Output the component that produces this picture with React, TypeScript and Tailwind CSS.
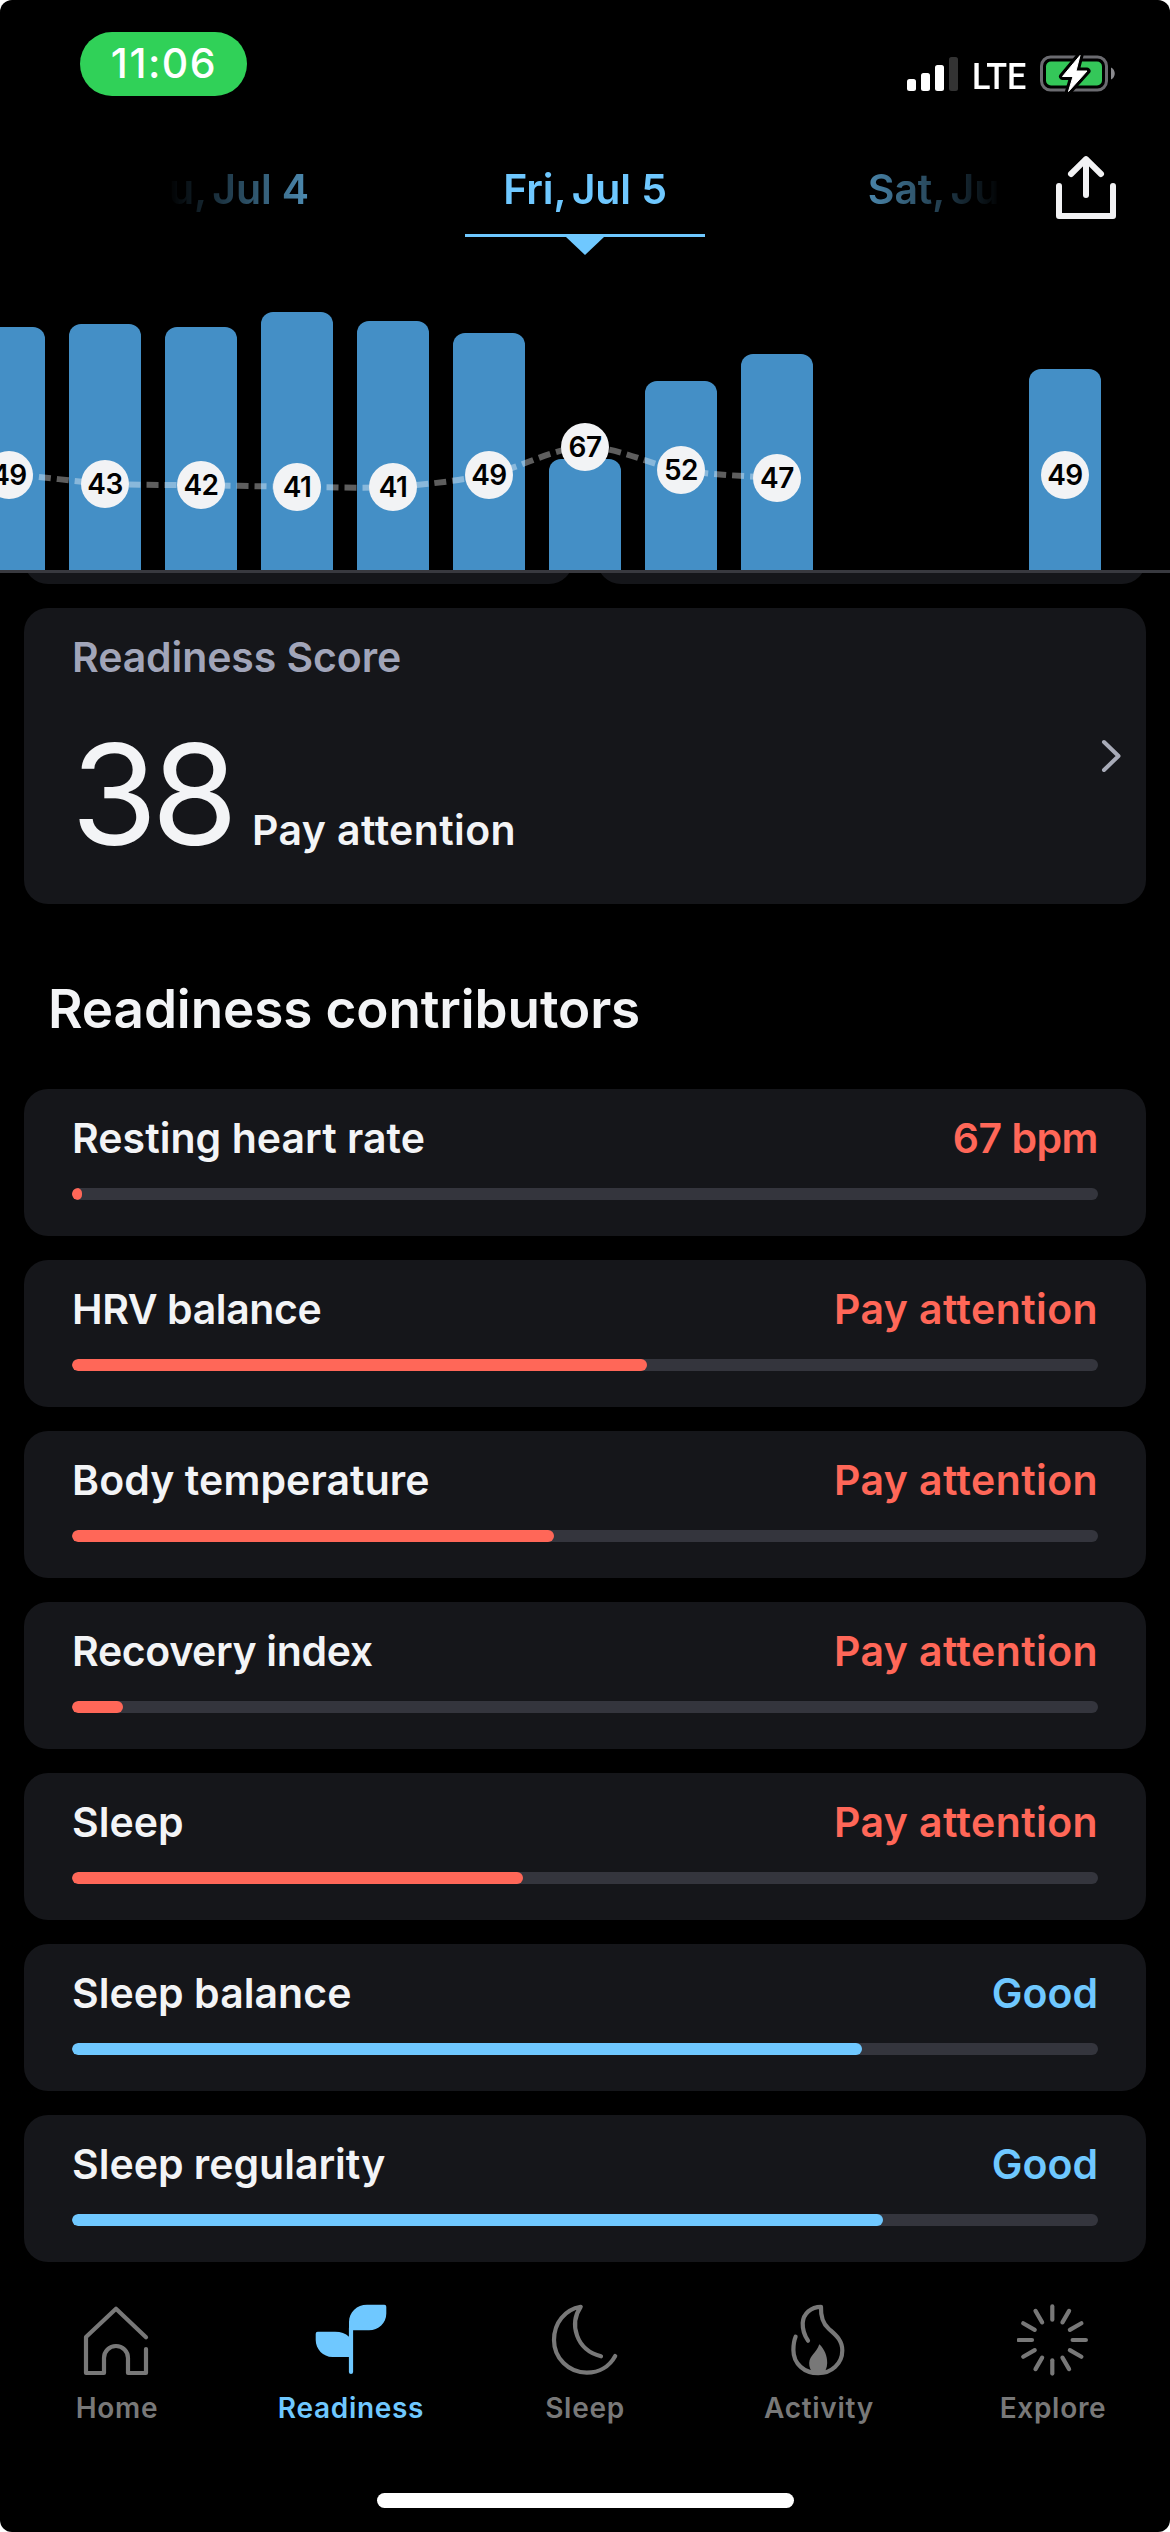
import type { ReactNode } from "react";

type Day = { height: number; bpm: number } | null;

const days: Day[] = [
  { height: 243, bpm: 49 },
  { height: 246, bpm: 43 },
  { height: 243, bpm: 42 },
  { height: 258, bpm: 41 },
  { height: 249, bpm: 41 },
  { height: 237, bpm: 49 },
  { height: 111, bpm: 67 },
  { height: 189, bpm: 52 },
  { height: 216, bpm: 47 },
  null,
  null,
  { height: 201, bpm: 49 },
];

const CHART_HEIGHT = 270;
const PITCH = 96;
const FIRST_CENTER = 9;

// Height of a heart-rate marker's centre above the chart's baseline.
const markerHeight = (bpm: number) => 95.5 + (bpm - 49) * 1.525;

// Smooth curve through the consecutive days that have data.
function trendPath() {
  const pts: [number, number][] = [];
  for (let i = 0; i < days.length; i++) {
    const d = days[i];
    if (!d) break;
    pts.push([FIRST_CENTER + i * PITCH, CHART_HEIGHT - markerHeight(d.bpm)]);
  }
  let path = `M${pts[0][0]} ${pts[0][1]}`;
  for (let i = 0; i < pts.length - 1; i++) {
    const p0 = pts[Math.max(i - 1, 0)];
    const p1 = pts[i];
    const p2 = pts[i + 1];
    const p3 = pts[Math.min(i + 2, pts.length - 1)];
    path += ` C${p1[0] + PITCH / 3} ${p1[1] + (p2[1] - p0[1]) / 6} ${p2[0] - PITCH / 3} ${p2[1] - (p3[1] - p1[1]) / 6} ${p2[0]} ${p2[1]}`;
  }
  return path;
}

function StatusBar() {
  return (
    <div className="flex h-[96px] items-end justify-between pl-[80px] pr-[54px]">
      <div className="flex h-[64px] w-[167px] items-center justify-center rounded-[32px] bg-[#30d158] pl-[1px] text-[41px] font-medium tracking-[1.5px] text-white">
        11:06
      </div>
      <div className="flex h-[41px] items-start">
        <svg className="mt-[2px] h-[34px] w-[52px]" viewBox="0 0 52 34">
          <rect x="0" y="22" width="9" height="12" rx="2.5" fill="#fff" />
          <rect x="14" y="16" width="9" height="18" rx="2.5" fill="#fff" />
          <rect x="28" y="8" width="9" height="26" rx="2.5" fill="#fff" />
          <rect x="42" y="0" width="9" height="34" rx="2.5" fill="#333" />
        </svg>
        <div className="mt-px ml-[13px] w-[68px] font-['Roboto'] text-[37.5px] leading-[41px] font-medium text-white">
          <span className="inline-block origin-left scale-x-[0.91]">LTE</span>
        </div>
        <svg className="-mt-px h-[40px] w-[76px]" viewBox="0 0 76 40">
          <rect x="1.5" y="3" width="65" height="33" rx="9" fill="none" stroke="#6b6b70" strokeWidth="3" />
          <rect x="6" y="7.5" width="56" height="24" rx="5" fill="#34c759" />
          <path d="M71 13.5 C76 15.5 76 23.5 71 25.5 Z" fill="#8a8a8e" />
          <path
            d="M40 1.5 L22.5 22.5 H33 L28.5 37.5 L47 17 H36 Z"
            fill="#fff"
            stroke="#000"
            strokeWidth="7"
            strokeLinejoin="round"
          />
          <path d="M40 1.5 L22.5 22.5 H33 L28.5 37.5 L47 17 H36 Z" fill="#fff" stroke="#fff" strokeWidth="1" strokeLinejoin="round" />
        </svg>
      </div>
    </div>
  );
}

function DateTab({ weekday, date }: { weekday: string; date: string }) {
  return (
    <div className="w-[372px] shrink-0">
      {weekday},<span className="-ml-[5px]"> {date}</span>
    </div>
  );
}

function DateTabs() {
  return (
    <div className="relative h-[158px]">
      <div className="flex justify-center overflow-hidden pt-[63px] text-center text-[41px] leading-[60px] font-semibold tracking-[-0.1px] text-[#6fc8ff] [mask-image:linear-gradient(to_right,transparent_168px,black_370px,black_800px,transparent_1002px)]">
        <DateTab weekday="Thu" date="Jul 4" />
        <DateTab weekday="Fri" date="Jul 5" />
        <DateTab weekday="Sat" date="Jul 6" />
      </div>
      <div className="mx-auto mt-[15px] flex w-[240px] flex-col items-center border-t-[3px] border-[#6fc8ff]">
        <svg className="h-[18px] w-[38px]" viewBox="0 0 38 18">
          <path d="M0 0 H38 L19 18 Z" fill="#6fc8ff" />
        </svg>
      </div>
      <svg className="absolute top-[59px] right-[53px] h-[66px] w-[62px]" viewBox="0 0 62 66" fill="none" stroke="#f2f2f4" strokeWidth="6" strokeLinecap="round" strokeLinejoin="round">
        <path d="M31 5 V40" />
        <path d="M16 19 L31 4.2 L46 19" />
        <path d="M4 31 V61 H58 V31" />
      </svg>
    </div>
  );
}

function Chart() {
  return (
    <div className="relative mt-[46px] h-[273px] overflow-hidden border-b-[3px] border-[#38393f]">
      <div className="-ml-[27px] flex h-[270px] items-end gap-6">
        {days.map((d, i) => (
          <div key={i} className="relative flex w-[72px] shrink-0 flex-col items-center">
            {d && (
              <>
                <div className="w-full rounded-t-[12px] bg-[#448fc6]" style={{ height: d.height }} />
                <div
                  className="absolute z-20 flex h-[48px] w-[48px] items-center justify-center rounded-full bg-[#f2f3f5] text-[28px] font-semibold tracking-[-0.5px] text-black"
                  style={{ bottom: markerHeight(d.bpm) - 24 }}
                >
                  {d.bpm}
                </div>
              </>
            )}
          </div>
        ))}
      </div>
      <svg className="absolute top-0 left-0 z-10 h-[270px] w-[1170px]" viewBox="0 0 1170 270">
        <path d={trendPath()} fill="none" stroke="#ffffff" strokeOpacity="0.37" strokeWidth="6" strokeDasharray="12 6" strokeDashoffset="6" />
      </svg>
    </div>
  );
}

function ScoreCard() {
  return (
    <div className="mx-6 mt-6 h-[296px] rounded-[24px] bg-[#15161a] pt-[25px] pr-[24px] pl-[48px]">
      <div className="text-[41px] leading-[48px] font-semibold tracking-[-0.1px] text-[#a1a5b9]">Readiness Score</div>
      <div className="flex justify-between">
        <div className="flex items-baseline pt-[29px] text-[#f3f4f6]">
          <span className="-ml-px text-[140px] leading-[168px] tracking-[-6px]">38</span>
          <span className="ml-[20px] text-[41px] font-semibold tracking-[0.4px]">Pay attention</span>
        </div>
        <svg className="mt-[57px] h-[36px] w-[21px]" viewBox="0 0 21 36" fill="none" stroke="#a8abb8" strokeWidth="4" strokeLinecap="round" strokeLinejoin="round">
          <path d="M3 4 L17.5 18 L3 32" />
        </svg>
      </div>
    </div>
  );
}

type Contributor = { name: string; nameClass: string; value: string; valueClass: string; percent: number; barClass: string };

const attention = { value: "Pay attention", valueClass: "text-[#ff6758] tracking-[0.4px]", barClass: "bg-[#ff6758]" };
const good = { value: "Good", valueClass: "text-[#6fc8ff]", barClass: "bg-[#6fc8ff]" };

const contributors: Contributor[] = [
  { name: "Resting heart rate", nameClass: "tracking-[0.05px]", value: "67 bpm", valueClass: "text-[#ff6758] tracking-[-0.5px]", barClass: "bg-[#ff6758]", percent: 1 },
  { name: "HRV balance", nameClass: "tracking-[-0.4px]", percent: 56, ...attention },
  { name: "Body temperature", nameClass: "tracking-[0.1px]", percent: 47, ...attention },
  { name: "Recovery index", nameClass: "tracking-[-0.35px]", percent: 5, ...attention },
  { name: "Sleep", nameClass: "tracking-[0px]", percent: 44, ...attention },
  { name: "Sleep balance", nameClass: "tracking-[0.05px]", percent: 77, ...good },
  { name: "Sleep regularity", nameClass: "tracking-[0px]", percent: 79, ...good },
];

function ContributorCard({ c }: { c: Contributor }) {
  return (
    <div className="h-[147px] rounded-[24px] bg-[#15161a] px-[48px] pt-[25px]">
      <div className="flex justify-between text-[41px] leading-[48px] font-semibold">
        <span className={`text-[#f3f4f6] ${c.nameClass}`}>{c.name}</span>
        <span className={c.valueClass}>{c.value}</span>
      </div>
      <div className="mt-[26px] h-[12px] overflow-hidden rounded-full bg-[#34353d]">
        <div className={`h-full rounded-full ${c.barClass}`} style={{ width: `${c.percent}%` }} />
      </div>
    </div>
  );
}

function NavItem({ label, className, children }: { label: string; className: string; children: ReactNode }) {
  return (
    <div className={`flex flex-1 flex-col items-center ${className}`}>
      <svg className="h-[72px] w-[72px]" viewBox="0 0 72 72" fill="none" stroke="currentColor" strokeWidth="4.2" strokeLinecap="round" strokeLinejoin="round">
        {children}
      </svg>
      <div className="mt-[12px] text-[28px] leading-[40px] font-semibold tracking-[0.7px]">{label}</div>
    </div>
  );
}

const rays = Array.from({ length: 12 }, (_, i) => i * 30);

function NavBar() {
  return (
    <div className="mt-[42px] flex">
      <NavItem label="Home" className="text-[#787878]">
        <path d="M65 33.3 L35 4.8 L5 33 V69 H23 V54 a12 12 0 0 1 24 0 V69 H65 V45" />
      </NavItem>
      <NavItem label="Readiness" className="text-[#6fc8ff]">
        <path d="M36 68 V24" />
        <path
          stroke="none"
          fill="currentColor"
          d="M34 26.5 V18 C34 8 42 0.7 52 0.7 H69.3 A2 2 0 0 1 71.3 2.7 V9.5 C71.3 19 63.5 26.3 54 26.3 H38 L36 53 H17.5 C8 53 0.7 45 0.7 36 V29.7 A2 2 0 0 1 2.7 27.7 H20 C26 27.7 30.5 29.5 34 32.7 Z"
        />
      </NavItem>
      <NavItem label="Sleep" className="text-[#787878]">
        <path d="M52 52.3 C27 46 20 20 31.7 2.8 C16 5.5 5 19 5 36 C5 54 19.5 68.7 37.8 68.7 C50 68.7 60.5 62.5 66.2 52" />
      </NavItem>
      <NavItem label="Activity" className="text-[#787878]">
        <path d="M25 36.7 C21.5 31.5 19.5 25 19.7 19 C20.3 9.5 28 2.9 38 2.8 C37.6 13 40 19.5 45.5 24.5 C52 30.5 59.3 35.5 59.3 46.5 C59.3 59.5 48.5 69.2 35.3 69.2 C21.5 69.2 10.4 60 10.4 46 C10.4 41 11 36.5 12.6 32.7" />
        <path stroke="none" fill="currentColor" d="M36.3 40.3 C41.5 45 44.3 52 44.2 59 C44 64 42.5 67 40 70 H30.5 C27.5 66.5 26 62.5 26.2 59 C26.6 51.5 33.5 49 36.3 40.3 Z" />
      </NavItem>
      <NavItem label="Explore" className="text-[#787878]">
        {rays.map((a) => (
          <path key={a} d="M35.3 2.4 V15.7" transform={`rotate(${a} 35.3 36)`} />
        ))}
      </NavItem>
    </div>
  );
}

export default function App() {
  return (
    <div className="w-[1170px] bg-white">
      <div className="flex h-[2532px] w-[1170px] flex-col overflow-hidden rounded-[12px] bg-black font-['Inter',sans-serif]">
        <StatusBar />
        <DateTabs />
        <Chart />
        <div className="flex h-[11px] items-end gap-6 overflow-hidden px-6">
          <div className="h-[60px] flex-1 shrink-0 rounded-[24px] bg-[#15161a]" />
          <div className="h-[60px] flex-1 shrink-0 rounded-[24px] bg-[#15161a]" />
        </div>
        <ScoreCard />
        <h2 className="mt-[75px] ml-[48px] text-[53px] leading-[60px] font-semibold tracking-[-0.1px] text-[#f3f4f6]">Readiness contributors</h2>
        <div className="mx-6 mt-[50px] flex flex-col gap-6">
          {contributors.map((c) => (
            <ContributorCard key={c.name} c={c} />
          ))}
        </div>
        <NavBar />
        <div className="mx-auto mt-[65px] h-[15px] w-[417px] shrink-0 rounded-full bg-white" />
      </div>
    </div>
  );
}
